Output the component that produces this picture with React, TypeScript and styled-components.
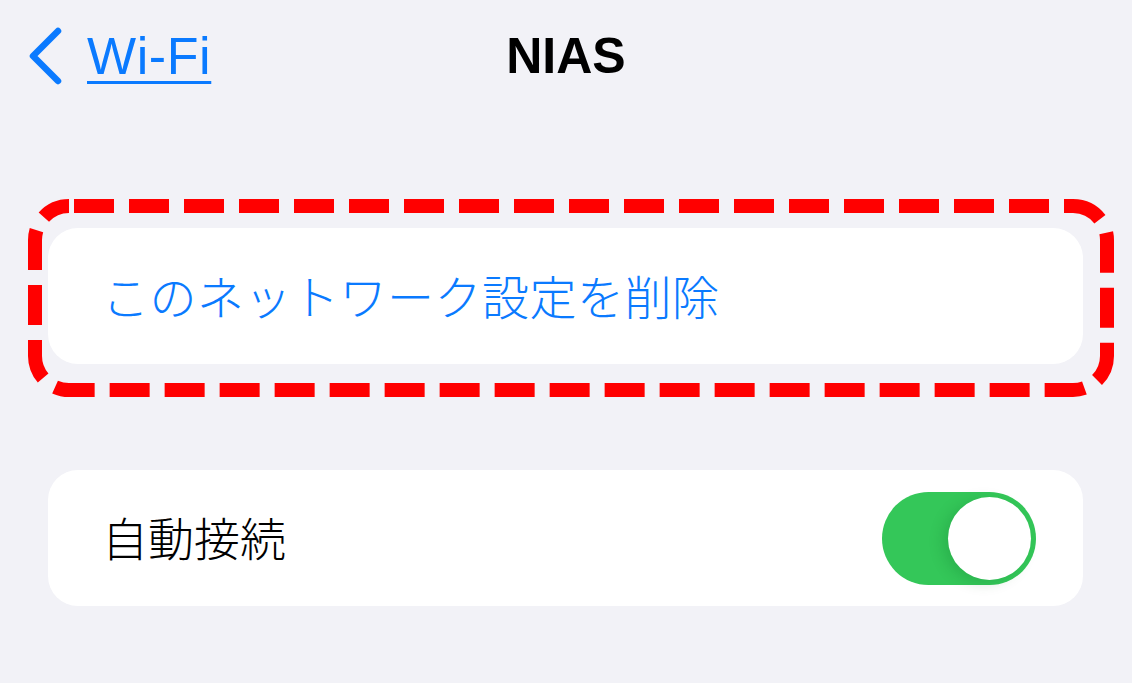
import React, { useState } from "react";
import styled, { createGlobalStyle } from "styled-components";

const GlobalStyle = createGlobalStyle`
  html, body {
    margin: 0;
    padding: 0;
    background: #f2f2f7;
  }
  body {
    font-family: "Liberation Sans", "Noto Sans CJK JP", sans-serif;
    -webkit-font-smoothing: antialiased;
  }
`;

const Screen = styled.div`
  width: 1132px;
  height: 683px;
  overflow: hidden;
  background: #f2f2f7;
`;

const NavBar = styled.header`
  height: 112px;
  display: grid;
  grid-template-columns: 1fr auto 1fr;
  align-items: center;
`;

const BackLink = styled.a`
  display: flex;
  align-items: center;
  gap: 25px;
  padding-left: 28px;
  color: #0a7aff;
  text-decoration: none;
  cursor: pointer;
`;

const BackLabel = styled.span`
  font-family: "Liberation Sans", sans-serif;
  font-size: 52px;
  letter-spacing: 0.6px;
  line-height: 1;
  text-decoration: underline;
  text-decoration-thickness: 3px;
  text-underline-offset: 7px;
`;

const Title = styled.h1`
  margin: 0;
  font-family: "Liberation Sans", sans-serif;
  font-weight: 700;
  font-size: 50px;
  line-height: 1;
  color: #000;
`;

const Content = styled.main`
  display: flex;
  flex-direction: column;
  gap: 106px;
  padding: 116px 49px 0 48px;
`;

const Highlight = styled.div`
  position: relative;
`;

const HighlightFrame = styled.svg`
  position: absolute;
  top: -29px;
  left: -20px;
  width: calc(100% + 51px);
  height: calc(100% + 62px);
  overflow: visible;
  pointer-events: none;
`;

const Card = styled.div<{ $between?: boolean }>`
  height: 136px;
  box-sizing: border-box;
  background: #fff;
  border-radius: 30px;
  display: flex;
  align-items: center;
  justify-content: ${(p) => (p.$between ? "space-between" : "flex-start")};
  padding: 0 47px 0 54px;
`;

const ActionText = styled.span<{ $tone?: "link" | "plain" }>`
  font-family: "Noto Sans CJK JP", "Liberation Sans", sans-serif;
  font-weight: 300;
  font-size: ${(p) => (p.$tone === "plain" ? "46px" : "47px")};
  letter-spacing: ${(p) => (p.$tone === "plain" ? "0" : "0.5px")};
  line-height: 1;
  margin-top: -4px;
  color: ${(p) => (p.$tone === "plain" ? "#000" : "#0a7aff")};
`;

const SwitchTrack = styled.button<{ $on: boolean }>`
  position: relative;
  width: 154px;
  height: 93px;
  border: none;
  padding: 0;
  border-radius: 47px;
  background: ${(p) => (p.$on ? "#34c759" : "#e9e9ea")};
  cursor: pointer;
`;

const SwitchKnob = styled.span<{ $on: boolean }>`
  position: absolute;
  top: 5px;
  left: ${(p) => (p.$on ? "66px" : "5px")};
  width: 83px;
  height: 83px;
  border-radius: 50%;
  background: #fff;
  box-shadow: -6px 3px 14px rgba(0, 90, 30, 0.18);
  transition: left 0.2s;
`;

function Chevron() {
  return (
    <svg width="34" height="58" viewBox="0 0 34 58" fill="none">
      <path
        d="M30 4 L5 29 L30 54"
        stroke="currentColor"
        strokeWidth="6.5"
        strokeLinecap="round"
        strokeLinejoin="round"
      />
    </svg>
  );
}

export default function App() {
  const [autoJoin, setAutoJoin] = useState(true);

  return (
    <Screen>
      <GlobalStyle />
      <NavBar>
        <BackLink>
          <Chevron />
          <BackLabel>Wi-Fi</BackLabel>
        </BackLink>
        <Title>NIAS</Title>
        <span />
      </NavBar>

      <Content>
        <Highlight>
          <Card>
            <ActionText>このネットワーク設定を削除</ActionText>
          </Card>
          <HighlightFrame>
            <rect
              x="7"
              y="7"
              width="1072"
              height="184"
              rx="34"
              fill="none"
              stroke="#ff0000"
              strokeWidth="14"
              strokeDasharray="40 15"
              strokeDashoffset="-5"
            />
          </HighlightFrame>
        </Highlight>

        <Card $between>
          <ActionText $tone="plain">自動接続</ActionText>
          <SwitchTrack $on={autoJoin} onClick={() => setAutoJoin(!autoJoin)}>
            <SwitchKnob $on={autoJoin} />
          </SwitchTrack>
        </Card>
      </Content>
    </Screen>
  );
}
